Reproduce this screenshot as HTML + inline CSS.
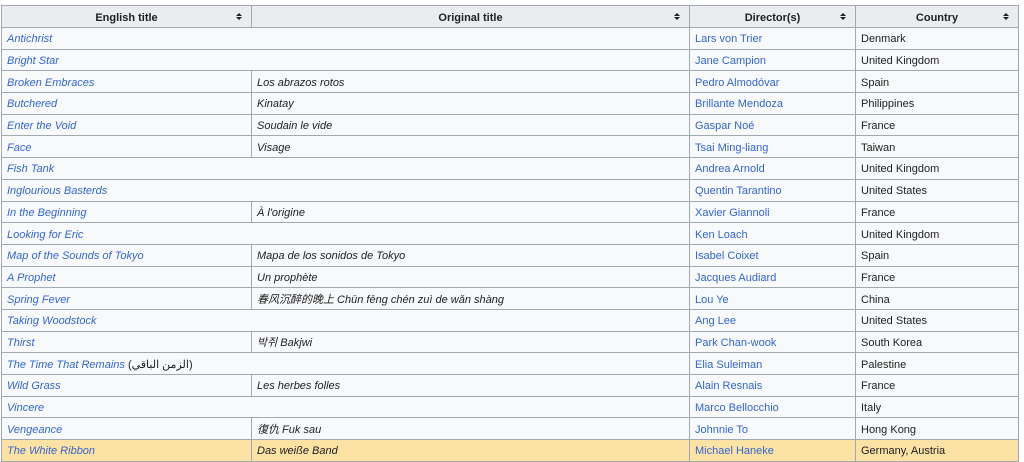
<!DOCTYPE html>
<html><head><meta charset="utf-8"><style>
body{margin:0;background:#fff;font-family:"Liberation Sans","Noto Sans CJK SC",sans-serif;font-size:11px;color:#202122}
table{position:absolute;left:1px;top:5px;border-collapse:collapse;table-layout:fixed;width:1017px;background:#f8f9fa}
td,th{border:1px solid #a2a9b1;height:20.7px;padding:2px 5px 0 5px;white-space:nowrap;overflow:hidden;line-height:14px;vertical-align:middle;box-sizing:border-box}
td{height:21.7px}
th{background:#eaecf0;font-weight:bold;text-align:center;position:relative;height:22px}
th::after{content:"";position:absolute;right:9px;top:7px;border:3px solid transparent;border-bottom:3px solid #202122;border-top:0}
th::before{content:"";position:absolute;right:9px;top:11px;border:3px solid transparent;border-top:3px solid #202122;border-bottom:0}
a{color:#3366cc;text-decoration:none}
td:first-child a{font-style:italic}
i{font-style:italic}
tr.h td{background:#fde2a5}
</style></head><body>
<table>
<colgroup><col style="width:250px"><col style="width:438px"><col style="width:166px"><col style="width:163px"></colgroup>
<tr><th>English title</th><th>Original title</th><th>Director(s)</th><th>Country</th></tr>
<tr><td colspan="2"><a>Antichrist</a></td><td><a>Lars von Trier</a></td><td>Denmark</td></tr>
<tr><td colspan="2"><a>Bright Star</a></td><td><a>Jane Campion</a></td><td>United Kingdom</td></tr>
<tr><td><a>Broken Embraces</a></td><td><i>Los abrazos rotos</i></td><td><a>Pedro Almodóvar</a></td><td>Spain</td></tr>
<tr><td><a>Butchered</a></td><td><i>Kinatay</i></td><td><a>Brillante Mendoza</a></td><td>Philippines</td></tr>
<tr><td><a>Enter the Void</a></td><td><i>Soudain le vide</i></td><td><a>Gaspar Noé</a></td><td>France</td></tr>
<tr><td><a>Face</a></td><td><i>Visage</i></td><td><a>Tsai Ming-liang</a></td><td>Taiwan</td></tr>
<tr><td colspan="2"><a>Fish Tank</a></td><td><a>Andrea Arnold</a></td><td>United Kingdom</td></tr>
<tr><td colspan="2"><a>Inglourious Basterds</a></td><td><a>Quentin Tarantino</a></td><td>United States</td></tr>
<tr><td><a>In the Beginning</a></td><td><i>À l'origine</i></td><td><a>Xavier Giannoli</a></td><td>France</td></tr>
<tr><td colspan="2"><a>Looking for Eric</a></td><td><a>Ken Loach</a></td><td>United Kingdom</td></tr>
<tr><td><a>Map of the Sounds of Tokyo</a></td><td><i>Mapa de los sonidos de Tokyo</i></td><td><a>Isabel Coixet</a></td><td>Spain</td></tr>
<tr><td><a>A Prophet</a></td><td><i>Un prophète</i></td><td><a>Jacques Audiard</a></td><td>France</td></tr>
<tr><td><a>Spring Fever</a></td><td><i>春风沉醉的晚上 Chūn fēng chén zuì de wǎn shàng</i></td><td><a>Lou Ye</a></td><td>China</td></tr>
<tr><td colspan="2"><a>Taking Woodstock</a></td><td><a>Ang Lee</a></td><td>United States</td></tr>
<tr><td><a>Thirst</a></td><td><i>박쥐 Bakjwi</i></td><td><a>Park Chan-wook</a></td><td>South Korea</td></tr>
<tr><td colspan="2"><a>The Time That Remains</a> (الزمن الباقي)</td><td><a>Elia Suleiman</a></td><td>Palestine</td></tr>
<tr><td><a>Wild Grass</a></td><td><i>Les herbes folles</i></td><td><a>Alain Resnais</a></td><td>France</td></tr>
<tr><td colspan="2"><a>Vincere</a></td><td><a>Marco Bellocchio</a></td><td>Italy</td></tr>
<tr><td><a>Vengeance</a></td><td><i>復仇 Fuk sau</i></td><td><a>Johnnie To</a></td><td>Hong Kong</td></tr>
<tr class="h"><td><a>The White Ribbon</a></td><td><i>Das weiße Band</i></td><td><a>Michael Haneke</a></td><td>Germany, Austria</td></tr>
</table>
</body></html>
